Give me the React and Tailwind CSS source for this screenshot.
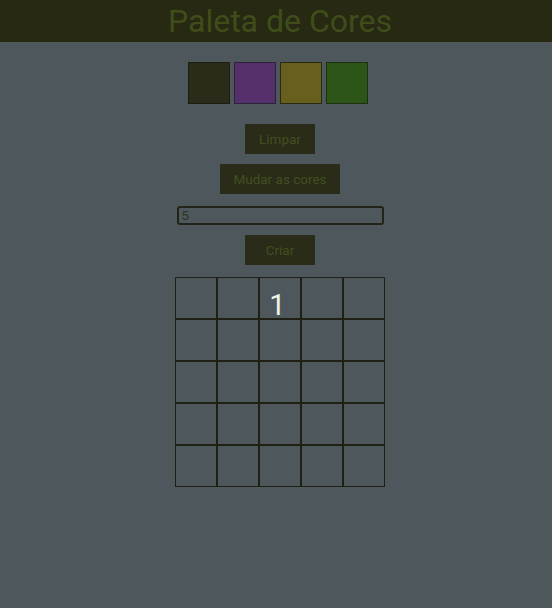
export default function App() {
  const cells = Array.from({ length: 25 });
  return (
    <div className="min-h-[608px] bg-[#4e585c] flex flex-col items-center pl-[8px]" style={{ fontFamily: "Roboto, 'Liberation Sans', sans-serif" }}>
      <header className="w-[calc(100%+8px)] -ml-[8px] h-[42px] bg-[#282912] flex items-center justify-center pl-[8px]">
        <h1 className="text-[32px] leading-none text-[#3f4d1b] font-normal">Paleta de Cores</h1>
      </header>
      <div className="mt-[20px] flex gap-[4px] pr-[4px]">
        <div className="w-[42px] h-[42px] border border-[#1c1d10] bg-[#2a2b18]" />
        <div className="w-[42px] h-[42px] border border-[#2a2238] bg-[#55306a]" />
        <div className="w-[42px] h-[42px] border border-[#2a2a14] bg-[#67601c]" />
        <div className="w-[42px] h-[42px] border border-[#1e3012] bg-[#2e5518]" />
      </div>
      <button className="mt-[20px] w-[70px] h-[30px] bg-[#2a2b19] text-[#41501e] text-[13.5px]">Limpar</button>
      <button className="mt-[10px] w-[120px] h-[30px] bg-[#2a2b19] text-[#41501e] text-[13.5px]">Mudar as cores</button>
      <input
        defaultValue="5"
        className="mt-[12px] w-[207px] h-[19px] border-2 border-[#22241a] rounded-[3px] bg-transparent text-[13.5px] text-[#2e3320] px-[3px] outline-none"
      />
      <button className="mt-[10px] w-[70px] h-[30px] bg-[#2a2b19] text-[#41501e] text-[13.5px]">Criar</button>
      <div className="mt-[12px] grid grid-cols-5 w-[210px]">
        {cells.map((_, i) => (
          <div key={i} className="w-[42px] h-[42px] border border-[#1d2012] flex items-start justify-center text-[29px] leading-none text-[#eef6e8]">
            {i === 2 ? <span className="mt-[13px] -ml-[5px]">1</span> : ""}
          </div>
        ))}
      </div>
    </div>
  );
}
